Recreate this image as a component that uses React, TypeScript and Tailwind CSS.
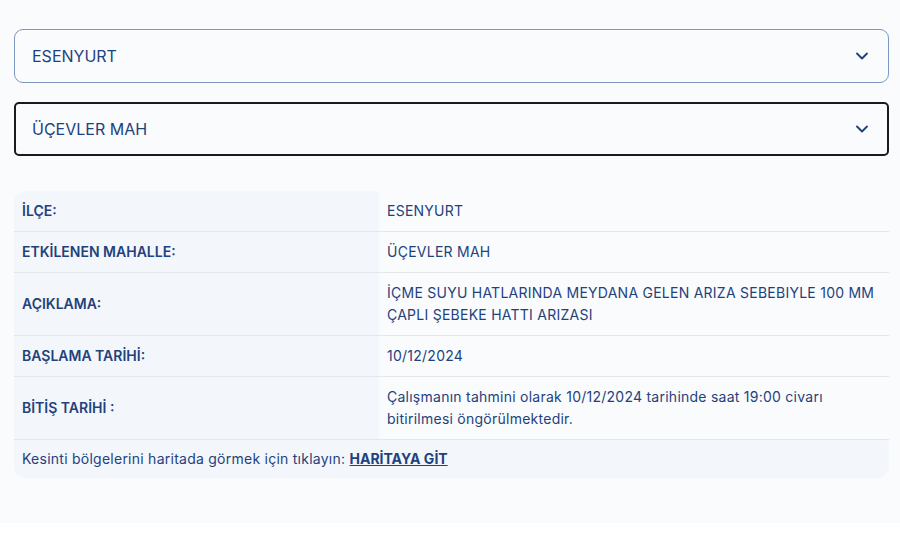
import React from 'react';
import { ChevronDown } from 'lucide-react';

interface InfoRow {
  label: string;
  value: React.ReactNode;
}

const rows: InfoRow[] = [
  { label: 'İLÇE:', value: 'ESENYURT' },
  { label: 'ETKİLENEN MAHALLE:', value: 'ÜÇEVLER MAH' },
  { label: 'AÇIKLAMA:', value: 'İÇME SUYU HATLARINDA MEYDANA GELEN ARIZA SEBEBIYLE 100 MM ÇAPLI ŞEBEKE HATTI ARIZASI' },
  { label: 'BAŞLAMA TARİHİ:', value: '10/12/2024' },
  { label: 'BİTİŞ TARİHİ :', value: 'Çalışmanın tahmini olarak 10/12/2024 tarihinde saat 19:00 civarı bitirilmesi öngörülmektedir.' },
];

const SelectBox: React.FC<{ value: string; focused?: boolean }> = ({ value, focused }) => (
  <div
    className={
      focused
        ? 'flex h-[54px] items-center justify-between rounded-[5px] border-2 border-[#1b1b1b] bg-[#f9fbfd] pl-[16px] pr-[15px]'
        : 'flex h-[54px] items-center justify-between rounded-[9px] border border-[#7d97c3] bg-[#f9fbfd] pl-[17px] pr-[16px]'
    }
  >
    <span className="text-[16px] text-[#1f427c]">{value}</span>
    <ChevronDown className="h-[20px] w-[20px] text-[#1f427c]" strokeWidth={2.25} />
  </div>
);

export default function App() {
  return (
    <div className="bg-white" style={{ fontFamily: 'Inter, "Noto Sans", sans-serif' }}>
      <div className="flex h-[523px] flex-col bg-[#f9fbfd] pl-[14px] pr-[11px] pt-[29px]">
        <div className="flex flex-col gap-[19px]">
          <SelectBox value="ESENYURT" />
          <SelectBox value="ÜÇEVLER MAH" focused />
        </div>

        <div className="mt-[35px] overflow-hidden rounded-[12px] bg-[#f3f6fb] text-[14px] text-[#1f427c]">
          {rows.map((row) => (
            <div key={row.label} className="grid grid-cols-[365px_1fr] border-b border-[#e3e6ea]">
              <div className="flex items-center px-[8px] py-[9px] font-semibold leading-[22px]">{row.label}</div>
              <div className="flex items-center bg-[#f9fbfd] py-[9px] pl-[8px] pr-[14px] leading-[22px] tracking-[0.25px]">
                {row.value}
              </div>
            </div>
          ))}
          <div className="px-[8px] py-[8px] leading-[22px] tracking-[0.25px]">
            Kesinti bölgelerini haritada görmek için tıklayın:{' '}
            <a href="#" className="font-bold tracking-normal underline">HARİTAYA GİT</a>
          </div>
        </div>
      </div>
    </div>
  );
}
